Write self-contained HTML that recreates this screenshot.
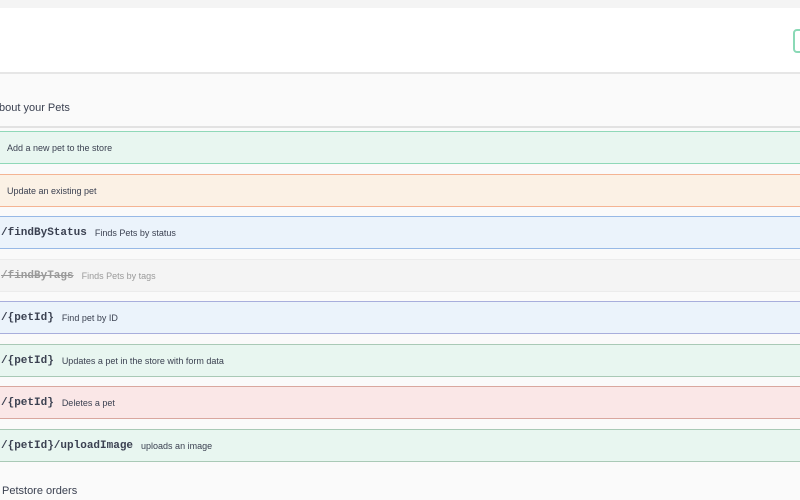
<!DOCTYPE html>
<html><head><meta charset="utf-8"><style>
*{margin:0;padding:0;box-sizing:border-box}
body{width:800px;height:500px;overflow:hidden;background:#fafafa;font-family:"Liberation Sans",sans-serif;position:relative}
.top{position:absolute;left:0;top:0;width:800px;height:8px;background:#f4f4f4}
.hdr{position:absolute;left:0;top:8px;width:800px;height:66px;background:#fff;border-bottom:2px solid #e6e6e6}
.btn{position:absolute;left:793px;top:29px;width:20px;height:24px;border:2px solid #8ad9b6;border-radius:4px;background:#fff}
.tag{position:absolute;left:0;top:76px;width:800px;height:52px;border-bottom:2px solid #e2e2e2}
.tag span{position:absolute;left:-1px;top:26px;font-size:11px;color:#3b4151}
.op{position:absolute;left:-2px;width:804px;height:33px;border:1px solid;display:flex;align-items:center}
.p{font-family:"Liberation Mono",monospace;font-weight:bold;font-size:11px;color:#3b4151;margin-left:2px}
.d{font-size:9px;color:#3b4151;margin-left:8px}
.post{background:#e8f6f0;border-color:#8fd8b8}
.put{background:#fbf1e5;border-color:#f4b493}
.get{background:#ebf3fb;border-color:#97b9e6}
.dep{background:#f4f4f4;border-color:#ececec}
.dep .p{color:#9a9a9a;text-decoration:line-through}
.dep .d{color:#9a9a9a}
.del{background:#fae7e7;border-color:#d9a79f}
.g2{border-color:#a8aedc}
.p2{border-color:#a9c9b6}
.orders{position:absolute;left:2px;top:485px;font-size:11px;color:#3b4151}
</style></head><body>
<div class="top"></div>
<div class="hdr"></div>
<div class="btn"></div>
<div class="tag"><span>bout your Pets</span></div>
<div class="op post" style="top:131px"><span class="d" style="margin-left:8px">Add a new pet to the store</span></div>
<div class="op put" style="top:174px"><span class="d" style="margin-left:8px">Update an existing pet</span></div>
<div class="op get" style="top:216px"><span class="p">/findByStatus</span><span class="d">Finds Pets by status</span></div>
<div class="op dep" style="top:259px"><span class="p">/findByTags</span><span class="d">Finds Pets by tags</span></div>
<div class="op get g2" style="top:301px"><span class="p">/{petId}</span><span class="d">Find pet by ID</span></div>
<div class="op post p2" style="top:344px"><span class="p">/{petId}</span><span class="d">Updates a pet in the store with form data</span></div>
<div class="op del" style="top:386px"><span class="p">/{petId}</span><span class="d">Deletes a pet</span></div>
<div class="op post p2" style="top:429px"><span class="p">/{petId}/uploadImage</span><span class="d">uploads an image</span></div>
<div class="orders">Petstore orders</div>
</body></html>
